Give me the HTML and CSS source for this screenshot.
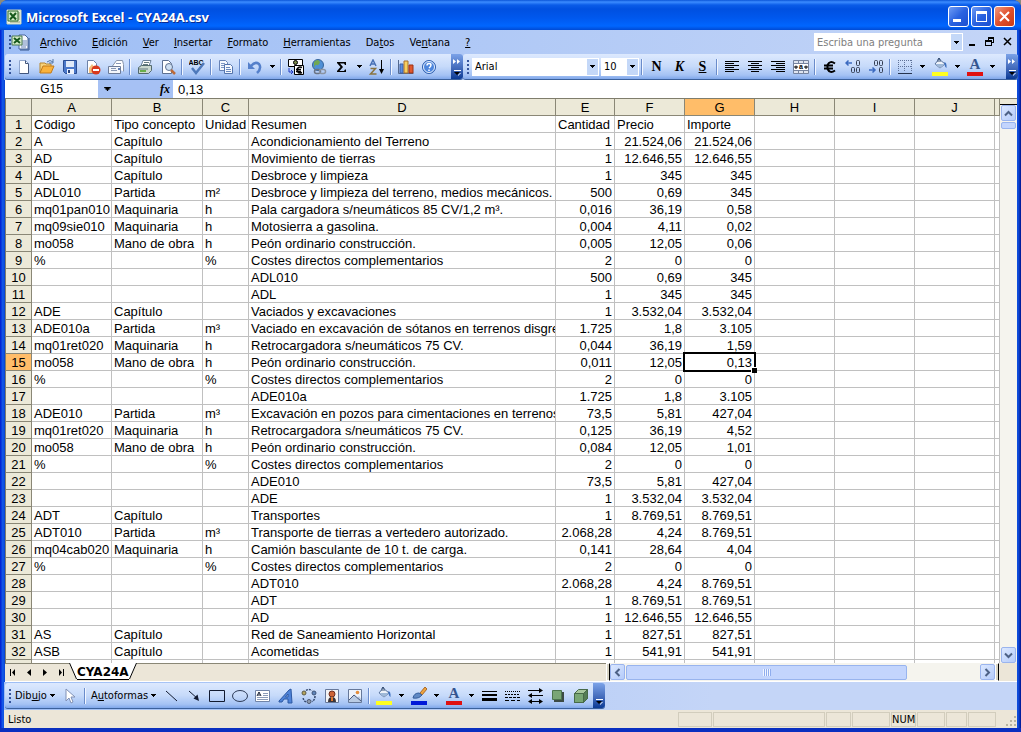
FILE: index.html
```html
<!doctype html>
<html lang="es">
<head>
    <meta charset="UTF-8">
    <meta name="viewport" content="width=device-width, initial-scale=1.0">
    <title>Microsoft Excel - CYA24A.csv</title>
    <link rel="stylesheet" href="styles.css">
</head>
<body>
    <!-- Shared icons -->
    <svg class="symbols" aria-hidden="true">
        <symbol id="caret" viewBox="0 0 5 3"><path d="M0 0h5v1h-1v1h-1v1h-1v-1h-1v-1h-1z"/></symbol>
        <symbol id="excel" viewBox="0 0 16 16">
            <path d="M1 1h14v14H1z" fill="#f4f7ea" stroke="#c9d4b8"/>
            <path d="M10 4h4M10 6h4M10 8h4M10 10h4M4 13h10" stroke="#8d9a70"/>
            <path d="M2 2h10v10H2z" fill="#d5ebc8" stroke="#2c6b2c"/>
            <path d="M4 4l6 6.500M10 4l-6 6.500" stroke="#17581c" stroke-width="2"/>
        </symbol>
        <symbol id="bucket" viewBox="0 0 16 16">
            <path d="M7 2l6 5-5 4-5-4z" fill="#eef3fa" stroke="#56709a"/>
            <path d="M3 7h10l-5 4z" fill="#9fb9d8"/>
            <path d="M6 5V2q1-2 2 0v3" fill="none" stroke="#3d5478"/>
            <path d="M12 5q3 0 2.500 6-2-1-2-5z" fill="#3b6fc0"/>
        </symbol>
        <symbol id="letter-a" viewBox="0 0 16 16">
            <text x="8" y="12" class="glyph-serif" text-anchor="middle" fill="#35558f">A</text>
        </symbol>
        <symbol id="chevron" viewBox="0 0 9 9"><path d="M1 6.500L4.500 3 8 6.500" fill="none" stroke="#4d6185" stroke-width="2"/></symbol>
        <symbol id="overflow" viewBox="0 0 8 6"><path d="M1 0h7v1H1z" fill="#fff"/><path d="M1 2h6L4 5z" fill="#000"/><path d="M5 5l2-2 1 0-3 3z" fill="#fff"/></symbol>
        <symbol id="more" viewBox="0 0 8 5"><path d="M0 0l3 2.500-3 2.500zM4 0l3 2.500-3 2.500z" fill="#fff"/></symbol>
    </svg>

    <div class="window">
        <header class="titlebar">
            <svg class="icon"><use href="#excel"/></svg>
            <h1>Microsoft Excel - CYA24A.csv</h1>
            <div class="window-buttons">
                <button aria-label="Minimizar"><svg viewBox="0 0 19 19"><path d="M4 12h8v3H4z" fill="#fff"/></svg></button>
                <button aria-label="Restaurar"><svg viewBox="0 0 19 19"><path d="M4 4h11v11H4zM5 7v7h9V7z" fill="#fff" fill-rule="evenodd"/></svg></button>
                <button class="close" aria-label="Cerrar"><svg viewBox="0 0 19 19"><path d="M5 5l9 9M14 5l-9 9" stroke="#fff" stroke-width="2"/></svg></button>
            </div>
        </header>

        <nav class="menubar">
            <span class="grip"></span>
            <svg class="icon book" viewBox="0 0 19 17">
                <path d="M8 1h6l3 3v11H8z" fill="#f6f9ff" stroke="#47649b"/>
                <path d="M18 4v12H9" fill="none" stroke="#34558c"/>
                <path d="M10 7h6M10 9h6M10 11h6M10 13h5" stroke="#6b87b8"/>
                <path d="M1 2h10v9H1z" fill="#d5ebc8" stroke="#4b7a50"/>
                <path d="M3 4l6 5M9 4l-6 5" stroke="#17581c" stroke-width="2"/>
            </svg>
            <button><u>A</u>rchivo</button>
            <button><u>E</u>dición</button>
            <button><u>V</u>er</button>
            <button><u>I</u>nsertar</button>
            <button><u>F</u>ormato</button>
            <button><u>H</u>erramientas</button>
            <button>Da<u>t</u>os</button>
            <button>Ve<u>n</u>tana</button>
            <button><u>?</u></button>
            <div class="combo question">
                <input type="text" placeholder="Escriba una pregunta" aria-label="Escriba una pregunta">
                <button aria-label="Preguntas anteriores"><svg class="caret"><use href="#caret"/></svg></button>
            </div>
            <div class="book-buttons">
                <button aria-label="Minimizar libro"><svg viewBox="0 0 10 10"><path d="M2 7h6v2H2z"/></svg></button>
                <button aria-label="Restaurar libro"><svg viewBox="0 0 10 10"><path d="M3 0h6v6H7v3H0V3h3zM4 2v1h3v2h1V2zM1 5v3h5V5z" fill-rule="evenodd"/></svg></button>
                <button aria-label="Cerrar libro"><svg viewBox="0 0 10 10"><path d="M1 1l7 7M8 1L1 8" stroke="#000" stroke-width="1.500"/></svg></button>
            </div>
        </nav>

        <div class="toolbars">
            <div class="toolbar standard">
                <span class="grip"></span>
                <button class="tool" aria-label="Nuevo"><svg class="icon" viewBox="0 0 16 16"><path d="M3.500 1.500h6l3 3v10h-9z" fill="#fff" stroke="#8fa5cc"/><path d="M12.500 5v9.500h-9M9.500 1.500v3h3" fill="none" stroke="#41557d"/></svg></button>
                <button class="tool" aria-label="Abrir"><svg class="icon" viewBox="0 0 16 16"><path d="M1 14V4h5l1 1h5v3" fill="#f7d37c" stroke="#b8862c"/><path d="M1 14l3-7h11l-3 7z" fill="#f9b23c" stroke="#c27a1a"/><path d="M8 3q3-3 6 0M14 0v4h-4" fill="none" stroke="#5277a8"/></svg></button>
                <button class="tool" aria-label="Guardar"><svg class="icon" viewBox="0 0 16 16"><path d="M1.500 1.500h13v13h-11l-2-2z" fill="#4b78c9" stroke="#2b4d92"/><path d="M4 2h8v6H4z" fill="#dfe9f8"/><path d="M5 10h7v5H5z" fill="#eef3fc"/><path d="M6 11h2v3H6z" fill="#26427c"/></svg></button>
                <button class="tool" aria-label="Permisos"><svg class="icon" viewBox="0 0 16 16"><path d="M2.500 1.500h6l3 3v10h-9z" fill="#fff" stroke="#6e83a8"/><path d="M4 9l3-4 3 4v5H4z" fill="#f3bf7c"/><circle cx="11" cy="11" r="4.500" fill="#d8381c"/><path d="M8 10h6v2H8z" fill="#fff"/></svg></button>
                <button class="tool" aria-label="Correo electrónico"><svg class="icon" viewBox="0 0 16 16"><path d="M4.500 7l4-5.500h6l1 4v7" fill="#fff" stroke="#8794aa"/><path d="M.5 7.500h12v7H.5z" fill="#f4f6fa" stroke="#6c7b98"/><path d="M3 9.500h5M3 11.500h6M8 4.500h5" stroke="#8796b3"/><path d="M10 9h2v2h-2z" fill="#5d7db4"/></svg></button>
                <span class="sep"></span>
                <button class="tool" aria-label="Imprimir"><svg class="icon" viewBox="0 0 16 16"><path d="M4 7l2-5.500h8l-2 5.500" fill="#fff" stroke="#69809a"/><path d="M1.500 8.500l3-2h10v5l-3 3h-10z" fill="#cbd8cf" stroke="#536a6e"/><path d="M2 10h9M7 3.500h5M6 5.500h5" stroke="#657b80"/><path d="M3 11h6v2H3z" fill="#68ae4a"/></svg></button>
                <button class="tool" aria-label="Vista preliminar"><svg class="icon" viewBox="0 0 16 16"><path d="M2.500 1.500h6l3 3v10h-9z" fill="#fff" stroke="#5d7090"/><circle cx="9" cy="8" r="3.500" fill="#cfe0f2" stroke="#5d7090"/><path d="M11 11l4 4" stroke="#bb6a3a" stroke-width="2.500"/></svg></button>
                <span class="sep"></span>
                <button class="tool" aria-label="Ortografía"><svg class="icon" viewBox="0 0 16 16"><text x="7" y="6" class="glyph-tiny" text-anchor="middle">ABC</text><path d="M3 9l4 5 8-10" fill="none" stroke="#4e79bb" stroke-width="2.500"/></svg></button>
                <span class="sep"></span>
                <button class="tool" aria-label="Copiar"><svg class="icon" viewBox="0 0 16 16"><path d="M1.500 1.500h6l2 2v8h-8z" fill="#f5f8fe" stroke="#6682b6"/><path d="M3 4.500h4M3 6.500h4M3 8.500h3" stroke="#7d97c5"/><path d="M6.500 5.500h6l2 2v7h-8z" fill="#f5f8fe" stroke="#5474ad"/><path d="M8 8.500h4M8 10.500h5M8 12.500h5" stroke="#6988bd"/></svg></button>
                <span class="sep"></span>
                <button class="tool" aria-label="Deshacer"><svg class="icon" viewBox="0 0 16 16"><path d="M4 7q4-5 8-2 3 4-2 9" fill="none" stroke="#5580cb" stroke-width="2.500"/><path d="M1 3v7h7z" fill="#5580cb"/></svg></button>
                <button class="drop" aria-label="Acciones para deshacer"><svg class="caret"><use href="#caret"/></svg></button>
                <span class="sep"></span>
                <button class="tool" aria-label="Euroconversión"><svg class="icon" viewBox="0 0 16 16"><path d="M.5.5h14v7H.5z" fill="#fff" stroke="#000"/><circle cx="7.500" cy="3.500" r="2" fill="#7a8a4a" stroke="#000"/><path d="M1 9v4h4M3 11l2 2-2 2" fill="none" stroke="#2038c0"/><path d="M6.500 6.500h9v9h-9z" fill="#fff" stroke="#000"/><path d="M14 8.500q-3-1.500-4.500 1v3q1.500 2.500 4.500 1M8 10.500h5M8 12.500h5" fill="none" stroke="#000" stroke-width="1.500"/></svg></button>
                <button class="tool" aria-label="Hipervínculo"><svg class="icon" viewBox="0 0 16 16"><circle cx="7" cy="6" r="5.500" fill="#4e8fd6" stroke="#35649a"/><path d="M3 3q4-4 6 0-1 4-3 3t-3 3z" fill="#71a852"/><rect x="3.500" y="10.500" width="6" height="4" rx="2" fill="none" stroke="#6a7484" stroke-width="1.500"/><rect x="8.500" y="10.500" width="6" height="4" rx="2" fill="none" stroke="#8b94a2" stroke-width="1.500"/></svg></button>
                <button class="tool" aria-label="Autosuma"><svg class="icon" viewBox="0 0 16 16"><path d="M3 3h9v3h-1l-1-1.500H6L9 8l-3.500 4H10l1-1.500h1V13H3v-1l3.500-4L3 4z"/></svg></button>
                <button class="drop" aria-label="Más funciones"><svg class="caret"><use href="#caret"/></svg></button>
                <button class="tool" aria-label="Orden ascendente"><svg class="icon" viewBox="0 0 16 16"><path d="M1 7l3-6 3 6M2 5h4" fill="none" stroke="#4770b5" stroke-width="1.500"/><path d="M1.500 9.500h5l-5 5.500h6" fill="none" stroke="#8a7440" stroke-width="1.500"/><path d="M12.500 1v12" stroke="#000"/><path d="M10 10h5l-2.500 5z"/></svg></button>
                <span class="sep"></span>
                <button class="tool" aria-label="Asistente para gráficos"><svg class="icon" viewBox="0 0 16 16"><path d="M.5 1v13.500h15" fill="none" stroke="#53698f"/><path d="M2 5h3v9H2z" fill="#5a8ee0" stroke="#3a5ea8"/><path d="M6 2h4v12H6z" fill="#f6cf60" stroke="#a86e2a"/><path d="M11 6h4v8h-4z" fill="#e0582e" stroke="#9c3216"/></svg></button>
                <button class="tool" aria-label="Ayuda"><svg class="icon" viewBox="0 0 16 16"><circle cx="8" cy="8" r="6.500" fill="#4d86dd" stroke="#2e5fae"/><circle cx="8" cy="8" r="5.500" fill="none" stroke="#e6effc"/><path d="M6 6.500q0-2 2-2t2 1.500-2 3M8 10.500V12" fill="none" stroke="#fff" stroke-width="1.500"/></svg></button>
                <button class="overflow" aria-label="Más botones"><svg class="more"><use href="#more"/></svg><svg class="flow"><use href="#overflow"/></svg></button>
            </div>

            <div class="toolbar format">
                <span class="grip"></span>
                <div class="combo font">
                    <select aria-label="Fuente"><option>Arial</option><option>Tahoma</option></select>
                    <span class="arrow"><svg class="caret"><use href="#caret"/></svg></span>
                </div>
                <div class="combo size">
                    <select aria-label="Tamaño de fuente"><option>10</option><option>12</option></select>
                    <span class="arrow"><svg class="caret"><use href="#caret"/></svg></span>
                </div>
                <span class="sep"></span>
                <button class="tool letter" aria-label="Negrita"><b>N</b></button>
                <button class="tool letter" aria-label="Cursiva"><i>K</i></button>
                <button class="tool letter" aria-label="Subrayado"><u>S</u></button>
                <span class="sep"></span>
                <button class="tool" aria-label="Alinear a la izquierda"><svg class="icon crisp" viewBox="0 0 16 16"><path d="M1 2h14v1H1zM1 4h9v1H1zM1 6h14v1H1zM1 8h9v1H1zM1 10h14v1H1zM1 12h9v1H1z"/></svg></button>
                <button class="tool" aria-label="Centrar"><svg class="icon crisp" viewBox="0 0 16 16"><path d="M1 2h14v1H1zM4 4h8v1H4zM1 6h14v1H1zM4 8h8v1H4zM1 10h14v1H1zM4 12h8v1H4z"/></svg></button>
                <button class="tool" aria-label="Alinear a la derecha"><svg class="icon crisp" viewBox="0 0 16 16"><path d="M1 2h14v1H1zM6 4h9v1H6zM1 6h14v1H1zM6 8h9v1H6zM1 10h14v1H1zM6 12h9v1H6z"/></svg></button>
                <button class="tool" aria-label="Combinar y centrar"><svg class="icon" viewBox="0 0 16 16"><path d="M.5 1.500h15v13H.5z" fill="#dfe5f0" stroke="#75839f"/><path d="M1 4.500h14M1 11.500h14M5.500 1v3M10.500 1v3M5.500 12v3M10.500 12v3" stroke="#75839f"/><path d="M1 5h14v6H1z" fill="#fff"/><path d="M1 8h4M15 8h-4M3 6.500V10M13 6.500V10" stroke="#000"/><text x="8" y="10" class="glyph-tiny" text-anchor="middle">a</text></svg></button>
                <span class="sep"></span>
                <button class="tool" aria-label="Euro"><svg class="icon" viewBox="0 0 16 16"><path d="M13 4.500Q8 1 5.500 6v4q2.500 5 7.500 1.500M2 6.500h9M2 9.500h9" fill="none" stroke="#000" stroke-width="2"/></svg></button>
                <button class="tool" aria-label="Aumentar decimales"><svg class="icon" viewBox="0 0 16 16"><path d="M1 4h6M3.500 1.500L1 4l2.500 2.500" fill="none" stroke="#3c6bc0" stroke-width="1.500"/><rect x="11.500" y="1.500" width="3" height="5" rx="1" fill="none" stroke="#333c50"/><rect x="6.500" y="8.500" width="3" height="5" rx="1" fill="none" stroke="#333c50"/><rect x="11.500" y="8.500" width="3" height="5" rx="1" fill="none" stroke="#333c50"/></svg></button>
                <button class="tool" aria-label="Disminuir decimales"><svg class="icon" viewBox="0 0 16 16"><path d="M1 11h6M4.500 8.500L7 11l-2.500 2.500" fill="none" stroke="#3c6bc0" stroke-width="1.500"/><rect x="6.500" y="1.500" width="3" height="5" rx="1" fill="none" stroke="#333c50"/><rect x="11.500" y="1.500" width="3" height="5" rx="1" fill="none" stroke="#333c50"/><rect x="11.500" y="8.500" width="3" height="5" rx="1" fill="none" stroke="#333c50"/></svg></button>
                <span class="sep"></span>
                <button class="tool" aria-label="Bordes"><svg class="icon" viewBox="0 0 16 16"><path d="M1 1.500h14M1 7.500h14M1.500 1v12M7.500 1v12M14.500 1v12" stroke="#5f7299" stroke-dasharray="1 1"/><path d="M1 14.500h14" stroke="#26344f"/></svg></button>
                <button class="drop" aria-label="Más bordes"><svg class="caret"><use href="#caret"/></svg></button>
                <button class="tool color yellow" aria-label="Color de relleno"><svg class="icon"><use href="#bucket"/></svg></button>
                <button class="drop" aria-label="Más colores de relleno"><svg class="caret"><use href="#caret"/></svg></button>
                <button class="tool color red" aria-label="Color de fuente"><svg class="icon"><use href="#letter-a"/></svg></button>
                <button class="drop" aria-label="Más colores de fuente"><svg class="caret"><use href="#caret"/></svg></button>
                <button class="overflow" aria-label="Más botones"><svg class="more"><use href="#more"/></svg><svg class="flow"><use href="#overflow"/></svg></button>
            </div>
        </div>

        <div class="formula-bar">
            <input class="name-box" type="text" value="G15" aria-label="Cuadro de nombres">
            <div class="formula-tools">
                <button aria-label="Nombres"><svg class="caret wide"><use href="#caret"/></svg></button>
                <button class="fx" aria-label="Insertar función"><i>fx</i></button>
            </div>
            <input class="formula" type="text" value="0,13" aria-label="Barra de fórmulas">
        </div>

        <main class="sheet">
            <div class="grid-view">
                <table id="grid">
                    <colgroup>
                        <col class="c-head"><col class="c-a"><col class="c-b"><col class="c-c"><col class="c-d"><col class="c-e">
                        <col class="c-num"><col class="c-num"><col class="c-std"><col class="c-std"><col class="c-std"><col>
                    </colgroup>
                    <thead>
                        <tr><th></th><th>A</th><th>B</th><th>C</th><th>D</th><th>E</th><th>F</th><th class="active">G</th><th>H</th><th>I</th><th>J</th><th></th></tr>
                    </thead>
                    <tbody></tbody>
                </table>
            </div>
            <div class="vscroll">
                <span class="split"></span>
                <button class="scroll-btn" aria-label="Subir"><svg><use href="#chevron"/></svg></button>
                <span class="thumb"></span>
                <span class="track"></span>
                <button class="scroll-btn down" aria-label="Bajar"><svg><use href="#chevron"/></svg></button>
            </div>
        </main>

        <div class="tabs">
            <div class="tab-nav">
                <button aria-label="Primera hoja"><svg viewBox="0 0 8 8"><path d="M1 0h1v7H1zM6 0v7L3 3.500z"/></svg></button>
                <button aria-label="Hoja anterior"><svg viewBox="0 0 8 8"><path d="M6 0v7L2 3.500z"/></svg></button>
                <button aria-label="Hoja siguiente"><svg viewBox="0 0 8 8"><path d="M2 0v7l4-3.500z"/></svg></button>
                <button aria-label="Última hoja"><svg viewBox="0 0 8 8"><path d="M6 0h1v7H6zM2 0v7l3-3.500z"/></svg></button>
            </div>
            <button class="tab">
                <svg class="edge" viewBox="0 0 8 17"><path d="M0 0h8v16H7z" fill="#fff"/><path d="M.5 0l7 16" stroke="#000" fill="none"/></svg>
                <span>CYA24A</span>
                <svg class="edge" viewBox="0 0 8 17"><path d="M0 0h8L1 16H0z" fill="#fff"/><path d="M7.500 0l-7 16" stroke="#000" fill="none"/></svg>
            </button>
            <div class="tab-space"></div>
            <span class="splitter"></span>
            <div class="hscroll">
                <button class="scroll-btn left" aria-label="Izquierda"><svg><use href="#chevron"/></svg></button>
                <span class="thumb"><i></i></span>
                <span class="track"></span>
                <button class="scroll-btn right" aria-label="Derecha"><svg><use href="#chevron"/></svg></button>
            </div>
            <span class="splitter"></span>
            <span class="corner"></span>
        </div>

        <div class="drawing">
            <div class="toolbar">
                <span class="grip"></span>
                <button class="text-tool draw">Dib<u>u</u>jo <svg class="caret"><use href="#caret"/></svg></button>
                <button class="tool" aria-label="Seleccionar objetos"><svg class="icon" viewBox="0 0 16 16"><path d="M4 1v12l3-3 2 5 2-1-2-5h4z" fill="#fff" stroke="#8090b5"/></svg></button>
                <span class="sep"></span>
                <button class="text-tool">A<u>u</u>toformas <svg class="caret"><use href="#caret"/></svg></button>
                <button class="tool" aria-label="Línea"><svg class="icon" viewBox="0 0 16 16"><path d="M3 3l11 10" stroke="#111a30"/></svg></button>
                <button class="tool" aria-label="Flecha"><svg class="icon" viewBox="0 0 16 16"><path d="M3 3l9 8" stroke="#111a30"/><path d="M13 13L7.500 10.500l4-4z" fill="#111a30"/></svg></button>
                <button class="tool" aria-label="Rectángulo"><svg class="icon" viewBox="0 0 16 16"><path d="M.5 2.500h15v11H.5z" fill="none" stroke="#111a30"/></svg></button>
                <button class="tool" aria-label="Elipse"><svg class="icon" viewBox="0 0 16 16"><ellipse cx="8" cy="8" rx="7.500" ry="5.500" fill="none" stroke="#2d3b58"/></svg></button>
                <button class="tool" aria-label="Cuadro de texto"><svg class="icon" viewBox="0 0 16 16"><path d="M.5 2.500h14v11H.5z" fill="#fff" stroke="#7084a8"/><path d="M2 8l2-4 2 4M3 7h2" fill="none" stroke="#111a30"/><path d="M8 5.500h5M8 7.500h5M2 9.500h11M2 11.500h11" stroke="#8b9bb8"/></svg></button>
                <button class="tool" aria-label="WordArt"><svg class="icon" viewBox="0 0 16 16"><path d="M1 13L11 2l2-1 1 14h-4v-4H6l-2 3H1zM7.500 9H10V6z" fill="#4f83d8" stroke="#2c58a3" fill-rule="evenodd"/></svg></button>
                <button class="tool" aria-label="Diagrama"><svg class="icon" viewBox="0 0 16 16"><path d="M5 2.500q3-2 6 0M14 8q0 4-3 5.500M5 14Q2 12 2 9" fill="none" stroke="#34486d" stroke-width="1.500" stroke-dasharray="2 1"/><circle cx="3" cy="5" r="2" fill="#b5a55b" stroke="#5c5a48"/><circle cx="13" cy="5" r="2" fill="#5f86bb" stroke="#3f5478"/><circle cx="8" cy="13.500" r="2" fill="#8e9cb0" stroke="#4b5870"/></svg></button>
                <button class="tool" aria-label="Imagen prediseñada"><svg class="icon" viewBox="0 0 16 16"><path d="M1.500 1.500h13v13h-13z" fill="#f3f4f6" stroke="#66789a"/><circle cx="8" cy="6" r="3" fill="#cd6436" stroke="#6d3022"/><path d="M4 14q0-5 4-5t4 5z" fill="#3a3438"/><path d="M7 9h2v4H7z" fill="#e0782f"/></svg></button>
                <button class="tool" aria-label="Imagen"><svg class="icon" viewBox="0 0 16 16"><path d="M1.500 1.500h13v13h-13z" fill="#edf3fc" stroke="#66789a"/><path d="M2 12l5-5 3 3 2-2 2 3v3H2z" fill="#b9cbe4"/><path d="M2 12l5-5 7 6" fill="none" stroke="#47587b"/><circle cx="10.500" cy="4.500" r="1.800" fill="#e58e3c"/></svg></button>
                <span class="sep"></span>
                <button class="tool color yellow" aria-label="Color de relleno del dibujo"><svg class="icon"><use href="#bucket"/></svg></button>
                <button class="drop" aria-label="Más rellenos"><svg class="caret"><use href="#caret"/></svg></button>
                <button class="tool color blue" aria-label="Color de línea"><svg class="icon" viewBox="0 0 16 16"><path d="M9 7l5-6 2 2-5 6z" fill="#eea43e" stroke="#a9692b"/><path d="M2 12q1-5 6-5l3 2q-3 4-9 3z" fill="#6089c4" stroke="#355e9d"/></svg></button>
                <button class="drop" aria-label="Más colores de línea"><svg class="caret"><use href="#caret"/></svg></button>
                <button class="tool color red" aria-label="Color de fuente del dibujo"><svg class="icon"><use href="#letter-a"/></svg></button>
                <button class="drop" aria-label="Más colores de texto"><svg class="caret"><use href="#caret"/></svg></button>
                <button class="tool" aria-label="Estilo de línea"><svg class="icon crisp" viewBox="0 0 16 16"><path d="M1 3h15v1H1zM1 6h15v2H1zM1 10h15v3H1z"/></svg></button>
                <button class="tool" aria-label="Estilo de guión"><svg class="icon crisp" viewBox="0 0 16 16"><path d="M1 3.500h15" stroke="#000" stroke-dasharray="1 1"/><path d="M1 6.500h15" stroke="#000" stroke-dasharray="2 1"/><path d="M1 9.500h15" stroke="#000" stroke-dasharray="3 1"/><path d="M1 12.500h15" stroke="#000" stroke-dasharray="4 2"/></svg></button>
                <button class="tool" aria-label="Estilo de flecha"><svg class="icon" viewBox="0 0 16 16"><path d="M1 2.500h13M2 7.500h14M2 13.500h13" stroke="#000"/><path d="M12 0l4 2.500L12 5zM5 5L1 7.500 5 10zM5 11l-4 2.500L5 16zM12 11l4 2.500-4 2.500z"/></svg></button>
                <button class="tool" aria-label="Estilo de sombra"><svg class="icon" viewBox="0 0 16 16"><path d="M4 4h10v10H4z" fill="#3c4b45"/><path d="M2.500 2.500h9v9h-9z" fill="#79a676" stroke="#4c754e"/></svg></button>
                <button class="tool" aria-label="Estilo 3D"><svg class="icon" viewBox="0 0 16 16"><path d="M1.500 5.500l4-4h9v9l-4 4h-9z" fill="#a7c79d" stroke="#476a49"/><path d="M1.500 5.500h9v9h-9z" fill="#78a674" stroke="#476a49"/><path d="M10.500 5.500l4-4v9l-4 4z" fill="#547d55" stroke="#476a49"/></svg></button>
                <button class="overflow" aria-label="Más botones"><svg class="flow"><use href="#overflow"/></svg></button>
            </div>
        </div>

        <footer class="status">
            <span class="ready">Listo</span>
            <span class="pane w34"></span>
            <span class="pane w112"></span>
            <span class="pane w25"></span>
            <span class="pane w38"></span>
            <span class="pane w25">NUM</span>
            <span class="pane w28"></span>
            <span class="pane w21"></span>
            <span class="pane w28"></span>
            <svg class="resize" viewBox="0 0 12 12"><path d="M9 0h2v2H9zM5 4h2v2H5zM9 4h2v2H9zM1 8h2v2H1zM5 8h2v2H5zM9 8h2v2H9z" fill="#b8b4a2"/></svg>
        </footer>
    </div>
    <script src="script.js"></script>
</body>
</html>
```

FILE: styles.css
```css
* {
    box-sizing: border-box;
}

body {
    margin: 0;
    height: 100vh;
    overflow: hidden;
    background: #8c8a7c;
    font-family: "DejaVu Sans Condensed", "DejaVu Sans", sans-serif;
    font-size: 11px;
    color: #000;
}

button,
input,
select {
    margin: 0;
    padding: 0;
    border: 0;
    border-radius: 0;
    background: none;
    color: inherit;
    font: inherit;
    outline: none;
}

svg {
    display: block;
    flex: none;
}

.symbols {
    display: none;
}

.icon {
    width: 16px;
    height: 16px;
}

.crisp {
    shape-rendering: crispEdges;
}

.caret {
    width: 5px;
    height: 3px;
}

.caret.wide {
    width: 7px;
    height: 4px;
}

.glyph-serif {
    font: bold 15px "Liberation Serif", serif;
}

.glyph-tiny {
    font: bold 7px "Liberation Sans", sans-serif;
}

.window {
    display: flex;
    flex-direction: column;
    height: 100%;
    padding: 0 4px;
    border-bottom: 4px solid #0a2fc0;
    border-radius: 8px 8px 0 0;
    background: linear-gradient(90deg, #0019cf, #1661ec 3px, #0a47d8 4px, #0a47d8 calc(100% - 4px), #1050e0 calc(100% - 3px), #001590);
    overflow: hidden;
}

/* Title bar */
.titlebar {
    display: flex;
    align-items: center;
    flex: none;
    height: 30px;
    margin: 0 -4px;
    padding: 3px 6px 0;
    background: linear-gradient(#0a55d8, #3c8cff 2px, #0a5ce8 5px, #0050e0 9px, #0058ee 18px, #0066ff 26px, #004ad4);
}

.titlebar h1 {
    flex: 1;
    margin: 0 0 0 4px;
    color: #fff;
    font: bold 13px "Open Sans", sans-serif;
    text-shadow: 1px 1px #0a2a90;
}

.window-buttons {
    display: flex;
    gap: 2px;
}

.window-buttons button {
    width: 21px;
    height: 21px;
    border: 1px solid #fff;
    border-radius: 3px;
    background: linear-gradient(135deg, #6f9cf5, #2a62e0 50%, #1c4fd0);
}

.window-buttons .close {
    background: linear-gradient(135deg, #f09a80, #e0502c 50%, #c83a14);
}

/* Menu bar */
.menubar {
    display: flex;
    align-items: center;
    flex: none;
    height: 24px;
    padding-left: 5px;
    background: linear-gradient(90deg, #9ebef5, #c4d5f7);
}

.menubar > button {
    padding: 0 7px 0 8px;
}

.menubar .book {
    width: 19px;
    height: 17px;
    margin-right: 2px;
}

.grip {
    flex: none;
    width: 2px;
    height: 14px;
    background: repeating-linear-gradient(#34539b 0 2px, transparent 2px 4px);
}

.combo {
    display: flex;
    background: #fff;
    height: 18px;
}

.combo input,
.combo select {
    flex: 1;
    min-width: 0;
    padding-left: 3px;
    appearance: none;
}

.combo input::placeholder {
    color: #808080;
    opacity: 1;
}

.combo > button,
.arrow {
    display: flex;
    align-items: center;
    justify-content: center;
    width: 12px;
    border: 1px solid #fff;
    border-left: 0;
    background: #c4d8f8;
}

.question {
    width: 149px;
    margin-left: auto;
}

.book-buttons {
    display: flex;
    gap: 8px;
    padding: 0 4px;
}

.book-buttons button {
    width: 10px;
}

.book-buttons svg {
    width: 10px;
    height: 10px;
}

/* Toolbars */
.toolbars {
    display: flex;
    justify-content: space-between;
    flex: none;
    height: 26px;
    background: linear-gradient(90deg, #9ebef5, #c4d5f7);
}

.toolbar {
    display: flex;
    align-items: center;
    height: 26px;
    padding-left: 4px;
    border-bottom: 1px solid #3b619c;
    border-radius: 3px;
    background: linear-gradient(#dde9fe, #c6dafa 50%, #a4c2f4 85%, #80a7ea);
}

.standard {
    margin-left: 1px;
}

.toolbar .grip + .tool {
    margin-left: 1px;
}

.tool {
    display: flex;
    align-items: center;
    justify-content: center;
    width: 23px;
    height: 22px;
}

.drop {
    display: flex;
    align-items: center;
    justify-content: center;
    width: 12px;
    height: 22px;
}

.sep {
    width: 2px;
    height: 16px;
    margin: 0 2px;
    border-left: 1px solid #6a8ccb;
    border-right: 1px solid #f1f6ff;
}

.overflow {
    display: flex;
    flex-direction: column;
    align-items: center;
    justify-content: flex-end;
    gap: 6px;
    width: 12px;
    height: 25px;
    margin-left: 11px;
    padding-bottom: 3px;
    border-radius: 0 3px 3px 0;
    background: linear-gradient(#7ba2e8, #3f67b8 60%, #0b3a94);
}

.format .overflow {
    margin-left: 8px;
}

.more {
    width: 8px;
    height: 5px;
}

.flow {
    width: 8px;
    height: 6px;
}

.font {
    width: 127px;
    margin: 0 2px 0 3px;
}

.size {
    width: 38px;
}

.letter {
    font: bold 14px "Liberation Serif", serif;
}

.color {
    position: relative;
}

.color::after {
    position: absolute;
    bottom: 2px;
    left: 4px;
    width: 16px;
    height: 4px;
    background: #ffff20;
    content: "";
}

.color .icon {
    margin-bottom: 4px;
}

.red::after {
    background: #e01010;
}

.blue::after {
    background: #0018d8;
}

/* Formula bar */
.formula-bar {
    display: flex;
    flex: none;
    height: 18px;
    margin-left: 1px;
    background: #fff;
    font: 13px "Liberation Sans", Arial, sans-serif;
}

.name-box {
    width: 93px;
    text-align: center;
    font-size: 12px;
}

.formula-tools {
    display: flex;
    align-items: center;
    justify-content: space-between;
    width: 75px;
    padding: 0 3px 0 6px;
    background: #a6c1f4;
}

.fx {
    font: bold 12px "Liberation Serif", serif;
}

.formula {
    flex: 1;
    padding-left: 5px;
}

/* Sheet */
.sheet {
    display: flex;
    flex: 1;
    min-height: 0;
    margin-left: 1px;
    background: #fff;
}

.grid-view {
    flex: 1;
    min-width: 0;
    overflow: hidden;
    border-top: 1px solid #7f7d6c;
    border-left: 1px solid #7f7d6c;
}

#grid {
    width: 100%;
    table-layout: fixed;
    border-spacing: 0;
    font: 13px "Liberation Sans", Arial, sans-serif;
}

#grid th,
#grid td {
    height: 17px;
    padding: 1px 2px 0;
    border-right: 1px solid #c0c0c0;
    border-bottom: 1px solid #c0c0c0;
    line-height: 15px;
    white-space: nowrap;
    overflow: hidden;
}

#grid th {
    padding: 1px 0 0;
    border-color: #8a8776;
    background: #ece9d8;
    font-weight: normal;
}

#grid th.active {
    background: #ffbd69;
}

#grid td:nth-child(n+6) {
    text-align: right;
}

#grid tr:first-child td {
    text-align: left;
}

#grid td.selected {
    position: relative;
    overflow: visible;
}

/* Selection frame with its fill handle */
.selected::before {
    position: absolute;
    inset: -2px;
    border: 2px solid #000;
    content: "";
}

.selected::after {
    position: absolute;
    right: -3px;
    bottom: -3px;
    width: 5px;
    height: 5px;
    border: 1px solid #fff;
    border-width: 1px 0 0 1px;
    background: #000;
    content: "";
}

.c-head { width: 26px; }
.c-a { width: 80px; }
.c-b { width: 91px; }
.c-c { width: 46px; }
.c-d { width: 307px; }
.c-e { width: 59px; }
.c-num { width: 70px; }
.c-std { width: 80px; }

/* Scroll bars */
.scroll-btn {
    display: flex;
    align-items: center;
    justify-content: center;
    flex: none;
    width: 15px;
    height: 16px;
    border: 1px solid #9ab4ee;
    border-radius: 2px;
    background: linear-gradient(135deg, #dce8ff, #b4cbfa);
}

.scroll-btn svg {
    width: 9px;
    height: 9px;
}

.down svg { transform: rotate(180deg); }
.left svg { transform: rotate(-90deg); }
.right svg { transform: rotate(90deg); }

.thumb {
    flex: none;
    border: 1px solid #98b4ee;
    border-radius: 2px;
    background: #c3d5fd;
}

.vscroll {
    display: flex;
    flex-direction: column;
    align-items: center;
    width: 17px;
    border-top: 1px solid #7f7d6c;
    background: #f5f4ee;
}

.vscroll .split {
    align-self: stretch;
    flex: none;
    height: 6px;
    border-bottom: 1px solid #000;
    background: #ece9d8;
}

.vscroll .thumb {
    width: 15px;
    height: 7px;
    margin-top: 1px;
}

.track {
    flex: 1;
}

/* Sheet tabs */
.tabs {
    display: flex;
    flex: none;
    height: 19px;
    margin-left: 1px;
    border-bottom: 1px solid #fff;
    background: #ece6d8;
}

.tab-nav {
    display: flex;
    align-items: center;
    border-top: 1px solid #8a8776;
}

.tab-nav button {
    display: flex;
    align-items: center;
    justify-content: center;
    width: 16px;
}

.tab-nav svg {
    width: 8px;
    height: 8px;
}

.tab {
    display: flex;
    align-items: flex-start;
    font: bold 12px "DejaVu Sans", sans-serif;
}

.tab span {
    height: 17px;
    background: #fff;
    border-bottom: 1px solid #000;
    line-height: 18px;
}

.edge {
    width: 8px;
    height: 17px;
}

.tab-space {
    flex: 1;
    border-top: 1px solid #8a8776;
}

.splitter {
    width: 4px;
    border: 1px solid #fff;
    border-right-color: #000;
    background: #d8d4c4;
}

.hscroll {
    display: flex;
    align-items: center;
    gap: 1px;
    width: 38%;
    background: #f5f4ee;
}

.hscroll .thumb {
    display: flex;
    align-items: center;
    justify-content: center;
    width: 73%;
    height: 15px;
}

.hscroll .thumb i {
    width: 8px;
    height: 7px;
    background: repeating-linear-gradient(90deg, #f0f5ff 0 1px, #8fadee 1px 2px);
}

.corner {
    width: 18px;
}

/* Drawing bar */
.drawing {
    display: flex;
    flex: none;
    height: 28px;
    padding: 1px 0 0 1px;
    background: linear-gradient(90deg, #9ebef5, #c4d5f7 70%);
}

.text-tool {
    display: flex;
    align-items: center;
    padding: 0 3px;
    white-space: pre;
}

.draw {
    padding: 0 4px;
}

.drawing .overflow {
    margin-left: 1px;
}

/* Status bar */
.status {
    display: flex;
    align-items: center;
    flex: none;
    gap: 1px;
    height: 18px;
    padding: 1px 0 0 4px;
    background: #ece6d8;
}

.ready {
    flex: 1;
}

.pane {
    height: 15px;
    border: 1px solid #d2cdbd;
    line-height: 14px;
    text-align: center;
}

.w21 { width: 21px; }
.w25 { width: 25px; }
.w28 { width: 28px; }
.w34 { width: 34px; }
.w38 { width: 38px; }
.w112 { width: 112px; }

.resize {
    align-self: flex-end;
    width: 12px;
    height: 12px;
    margin-left: 8px;
}
```

FILE: script.js
```js
// Sheet contents, one array per row: A, B, C, D, E, F, G
const rows = [
    ['Código', 'Tipo concepto', 'Unidad', 'Resumen', 'Cantidad', 'Precio', 'Importe'],
    ['A', 'Capítulo', '', 'Acondicionamiento del Terreno', '1', '21.524,06', '21.524,06'],
    ['AD', 'Capítulo', '', 'Movimiento de tierras', '1', '12.646,55', '12.646,55'],
    ['ADL', 'Capítulo', '', 'Desbroce y limpieza', '1', '345', '345'],
    ['ADL010', 'Partida', 'm²', 'Desbroce y limpieza del terreno, medios mecánicos.', '500', '0,69', '345'],
    ['mq01pan010', 'Maquinaria', 'h', 'Pala cargadora s/neumáticos 85 CV/1,2 m³.', '0,016', '36,19', '0,58'],
    ['mq09sie010', 'Maquinaria', 'h', 'Motosierra a gasolina.', '0,004', '4,11', '0,02'],
    ['mo058', 'Mano de obra', 'h', 'Peón ordinario construcción.', '0,005', '12,05', '0,06'],
    ['%', '', '%', 'Costes directos complementarios', '2', '0', '0'],
    ['', '', '', 'ADL010', '500', '0,69', '345'],
    ['', '', '', 'ADL', '1', '345', '345'],
    ['ADE', 'Capítulo', '', 'Vaciados y excavaciones', '1', '3.532,04', '3.532,04'],
    ['ADE010a', 'Partida', 'm³', 'Vaciado en excavación de sótanos en terrenos disgre', '1.725', '1,8', '3.105'],
    ['mq01ret020', 'Maquinaria', 'h', 'Retrocargadora s/neumáticos 75 CV.', '0,044', '36,19', '1,59'],
    ['mo058', 'Mano de obra', 'h', 'Peón ordinario construcción.', '0,011', '12,05', '0,13'],
    ['%', '', '%', 'Costes directos complementarios', '2', '0', '0'],
    ['', '', '', 'ADE010a', '1.725', '1,8', '3.105'],
    ['ADE010', 'Partida', 'm³', 'Excavación en pozos para cimentaciones en terrenos', '73,5', '5,81', '427,04'],
    ['mq01ret020', 'Maquinaria', 'h', 'Retrocargadora s/neumáticos 75 CV.', '0,125', '36,19', '4,52'],
    ['mo058', 'Mano de obra', 'h', 'Peón ordinario construcción.', '0,084', '12,05', '1,01'],
    ['%', '', '%', 'Costes directos complementarios', '2', '0', '0'],
    ['', '', '', 'ADE010', '73,5', '5,81', '427,04'],
    ['', '', '', 'ADE', '1', '3.532,04', '3.532,04'],
    ['ADT', 'Capítulo', '', 'Transportes', '1', '8.769,51', '8.769,51'],
    ['ADT010', 'Partida', 'm³', 'Transporte de tierras a vertedero autorizado.', '2.068,28', '4,24', '8.769,51'],
    ['mq04cab020', 'Maquinaria', 'h', 'Camión basculante de 10 t. de carga.', '0,141', '28,64', '4,04'],
    ['%', '', '%', 'Costes directos complementarios', '2', '0', '0'],
    ['', '', '', 'ADT010', '2.068,28', '4,24', '8.769,51'],
    ['', '', '', 'ADT', '1', '8.769,51', '8.769,51'],
    ['', '', '', 'AD', '1', '12.646,55', '12.646,55'],
    ['AS', 'Capítulo', '', 'Red de Saneamiento Horizontal', '1', '827,51', '827,51'],
    ['ASB', 'Capítulo', '', 'Acometidas', '1', '541,91', '541,91'],
    ['ASB010', 'Partida', 'm', 'Acometida general de saneamiento a la red municipal', '1', '424,22', '448,22']
];

const COLUMNS = 11;
const active = { row: 15, col: 6 };
const body = document.querySelector('#grid tbody');

rows.forEach((cells, index) => {
    const tr = document.createElement('tr');
    const head = document.createElement('th');
    head.textContent = index + 1;
    if (index + 1 === active.row) head.className = 'active';
    tr.appendChild(head);

    for (let col = 0; col < COLUMNS; col++) {
        const td = document.createElement('td');
        td.textContent = cells[col] || '';
        if (index + 1 === active.row && col === active.col) td.className = 'selected';
        tr.appendChild(td);
    }
    body.appendChild(tr);
});
```
